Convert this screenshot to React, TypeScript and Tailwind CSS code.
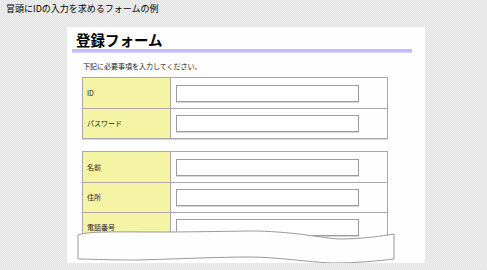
const jp = { fontFamily: '"Noto Sans CJK JP", "Noto Sans", sans-serif' }

type Row = { label: string }

function FormTable({ rows }: { rows: Row[] }) {
  return (
    <div className="w-[306px] border border-[#a8a8a8] shadow-[0_1px_0_#d4d4d4]">
      {rows.map((r, i) => (
        <div key={r.label} className={`flex h-[30px] ${i > 0 ? "border-t border-[#a8a8a8]" : ""}`}>
          <div className="w-[88px] bg-[#f4f4a4] border-r border-[#a8a8a8] flex items-center pl-[4px] text-[7px] text-[#222]">
            {r.label}
          </div>
          <div className="flex-1 flex items-center pl-[5px]">
            <div className="w-[183px] h-[17px] border border-[#9c9c9c] bg-white shadow-[0_1px_0_#d8d8d8]"></div>
          </div>
        </div>
      ))}
    </div>
  )
}

function Tear() {
  return (
    <svg className="absolute left-[10px] top-[201px]" width="320" height="40" viewBox="0 0 320 40">
      <path
        d="M1,7 C10,3 40,4 80,4 C120,4 160,3 180,3 C220,4 245,10 262,11 C285,11 305,8 317,6 L317,31 C300,33 280,35 255,35 C230,34 200,29 173,29 C140,29 100,31 60,32 C30,32 10,31 1,31 Z"
        fill="#fefefe"
        stroke="#9a9a9a"
        strokeWidth="1"
      />
    </svg>
  )
}

export default function App() {
  return (
    <div
      className="w-[487px] h-[270px] overflow-hidden bg-[#e9e9e9] bg-[repeating-conic-gradient(#e6e6e6_0_25%,#ececec_0_50%)] bg-[length:2px_2px]"
      style={jp}
    >
      <div className="pl-[6px] pt-[3px] h-[27px] text-[9px] leading-[12px] text-black">冒頭にIDの入力を求めるフォームの例</div>
      <div className="relative ml-[67px] w-[358px] h-[236px] bg-[#fdfefd] overflow-hidden">
        <div className="pl-[9px] pt-[5px] h-[22px] text-[14.5px] leading-[16px] font-bold text-black">登録フォーム</div>
        <div className="ml-[5px] w-[340px] h-[4px] bg-[#c6befa] border-b border-[#d8d4fb]"></div>
        <div className="pl-[16px] mt-[8px] h-[16px] text-[7px] leading-[10px] text-[#222]">下記に必要事項を入力してください。</div>
        <div className="pl-[15px]">
          <FormTable rows={[{ label: "ID" }, { label: "パスワード" }]} />
          <div className="h-[12px]"></div>
          <FormTable rows={[{ label: "名前" }, { label: "住所" }, { label: "電話番号" }]} />
        </div>
        <Tear />
      </div>
    </div>
  )
}
